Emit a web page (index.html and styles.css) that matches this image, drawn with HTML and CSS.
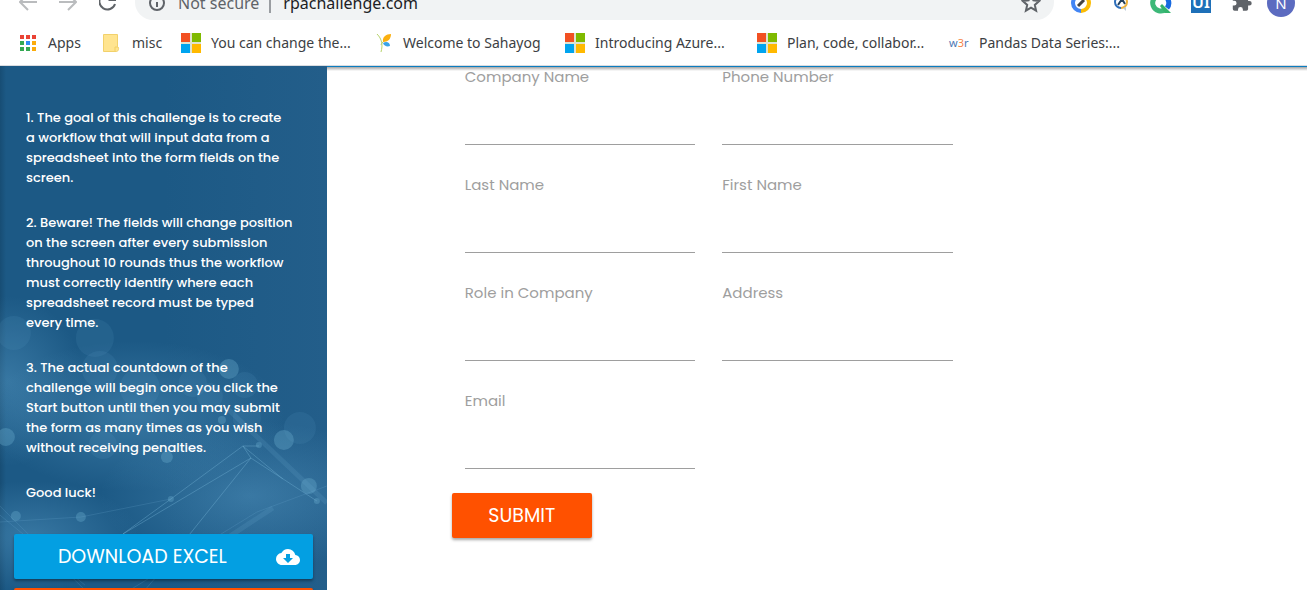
FILE: index.html
```html
<!DOCTYPE html>
<html lang="en">
<head>
<meta charset="utf-8">
<title>RPA Challenge</title>
<link rel="stylesheet" href="styles.css">
</head>
<body>
<svg class="defs" aria-hidden="true">
  <symbol id="windows" viewBox="0 0 20 20"><path fill="#dfe3d0" d="M0 0h20v20H0z"/><path fill="#f25022" d="M0 0h9v9H0z"/><path fill="#7fba00" d="M11 0h9v9h-9z"/><path fill="#00a4ef" d="M0 11h9v9H0z"/><path fill="#ffb900" d="M11 11h9v9h-9z"/></symbol>
</svg>
<header class="browser">
  <div class="toolbar">
    <div class="toolbar-row">
      <button class="nav" aria-label="Back"><svg width="18" height="18" viewBox="0 0 18 18"><path d="M18 9H2M9 1 1 9l8 8" fill="none" stroke="#babcbe" stroke-width="2"/></svg></button>
      <button class="nav" aria-label="Forward"><svg width="18" height="18" viewBox="0 0 18 18"><path d="M0 9h16M9 1l8 8-8 8" fill="none" stroke="#babcbe" stroke-width="2"/></svg></button>
      <button class="nav" aria-label="Reload"><svg width="18" height="18" viewBox="0 0 18 18"><path d="M15 4A8 8 0 1 0 16 11" fill="none" stroke="#5f6368" stroke-width="2"/><path d="M17 0v8H9z" fill="#5f6368"/></svg></button>
      <div class="address">
        <svg width="18" height="18" viewBox="0 0 18 18"><circle cx="9" cy="9" r="7" fill="none" stroke="#5f6368" stroke-width="2"/><path d="M9 8v5M9 4v2" stroke="#5f6368" stroke-width="2"/></svg>
        <span class="insecure">Not secure</span><span class="divider"></span><span class="url">rpachallenge.com</span>
        <svg class="star" width="20" height="20" viewBox="0 0 20 20"><path d="m10 2 2.4 5.4 5.8.6-4.4 3.9 1.3 5.8L10 14.700l-5.100 3 1.300-5.800L1.800 8l5.800-.6z" fill="none" stroke="#5f6368" stroke-width="2"/></svg>
      </div>
      <div class="extensions">
        <button class="ext" aria-label="Edit extension"><svg width="20" height="20" viewBox="0 0 20 20"><path d="M10 2a8 8 0 0 0 0 16" fill="none" stroke="#4285f4" stroke-width="4"/><path d="M10 2a8 8 0 0 1 0 16" fill="none" stroke="#fbbc04" stroke-width="4"/><path d="m7 13 6-6" stroke="#444" stroke-width="3"/></svg></button>
        <button class="ext" aria-label="Search extension"><svg width="18" height="20" viewBox="0 0 18 20"><path d="M9 3a6 6 0 0 0 0 12" fill="none" stroke="#2f6fba" stroke-width="2"/><path d="M9 3a6 6 0 0 1 0 12" fill="none" stroke="#edb13c" stroke-width="2"/><path d="m6 12 4-6 3 5M9 8l2-1" fill="none" stroke="#23415e" stroke-width="2"/><path d="m11 15 3 3v-4" fill="#b9cad5"/></svg></button>
        <button class="ext" aria-label="Q extension"><svg width="22" height="22" viewBox="0 0 22 22"><path d="M11 3a8 8 0 1 0 5 14" fill="none" stroke="#3cb878" stroke-width="5"/><path d="M11 3a8 8 0 0 1 6 13" fill="none" stroke="#1769e0" stroke-width="5"/><path d="m12 12 9 9h-6l-5-7z" fill="#34b46c"/></svg></button>
        <button class="ext" aria-label="UI extension"><span class="ui-logo">UI</span></button>
        <button class="ext" aria-label="Extensions"><svg width="24" height="24" viewBox="0 0 24 24"><path d="M20.500 11H19V7a2 2 0 0 0-2-2h-4V3.500a2.500 2.500 0 0 0-5 0V5H4a2 2 0 0 0-2 2v3.800h1.500a2.700 2.700 0 0 1 0 5.400H2V20a2 2 0 0 0 2 2h3.800v-1.500a2.700 2.700 0 0 1 5.400 0V22H17a2 2 0 0 0 2-2v-4h1.500a2.500 2.500 0 0 0 0-5z" fill="#5f6368" transform="translate(2 0) scale(.9)"/></svg></button>
        <button class="ext" aria-label="Profile"><span class="avatar">N</span></button>
      </div>
    </div>
  </div>
  <nav class="bookmarks">
    <a class="mark apps" href="#"><svg width="18" height="18" viewBox="0 0 18 18"><path fill="#ea4335" d="M1 1h4v4H1zM7 1h4v4H7zM13 1h4v4h-4z"/><path fill="#34a853" d="M1 7h4v4H1zM1 13h4v4H1zM7 13h4v4H7z"/><path fill="#2f8df5" d="M7 7h4v4H7z"/><path fill="#fbab0b" d="M13 7h4v4h-4zM13 13h4v4h-4z"/></svg><span>Apps</span></a>
    <a class="mark folder" href="#"><svg width="18" height="20" viewBox="0 0 18 20"><path fill="#ffe48f" stroke="#f2d16b" d="M1.500 1.500h14v12c2 1 1 5-1 5h-13z"/><path d="M13 18v-4h3" fill="none" stroke="#f2cf62"/></svg><span>misc</span></a>
    <a class="mark" href="#"><svg width="20" height="20"><use href="#windows"/></svg><span>You can change the...</span></a>
    <a class="mark" href="#"><svg width="20" height="20" viewBox="0 0 20 20"><path d="M4 1c5 5 6 11 4 18M8 12c1-3 3-4 5-5" fill="none" stroke="#b7d36b"/><path d="M10 9c-1-5 3-8 8-8 0 5-3 8-8 8z" fill="#fbb010"/><path d="M10 10c3-2 7-1 7 3-3 1-6 0-7-3z" fill="#39a4e8"/></svg><span>Welcome to Sahayog</span></a>
    <a class="mark" href="#"><svg width="20" height="20"><use href="#windows"/></svg><span>Introducing Azure...</span></a>
    <a class="mark" href="#"><svg width="20" height="20"><use href="#windows"/></svg><span>Plan, code, collabor...</span></a>
    <a class="mark" href="#"><span class="w3r">w<b>3</b>r</span><span>Pandas Data Series:...</span></a>
  </nav>
</header>
<div class="page">
  <aside class="sidebar">
    <svg class="network" viewBox="0 0 327 524" preserveAspectRatio="xMidYMid slice" aria-hidden="true">
      <defs>
        <radialGradient id="glow"><stop offset="0" stop-color="#6bb0da" stop-opacity=".34"/><stop offset="1" stop-color="#6bb0da" stop-opacity="0"/></radialGradient>
      </defs>
      <ellipse cx="8" cy="315" rx="75" ry="85" fill="url(#glow)"/>
      <ellipse cx="135" cy="350" rx="150" ry="75" fill="url(#glow)"/>
      <ellipse cx="250" cy="430" rx="150" ry="75" fill="url(#glow)"/>
      <ellipse cx="30" cy="470" rx="110" ry="55" fill="url(#glow)"/>
      <g fill="#65a8cf" fill-opacity=".12">
        <circle cx="14" cy="267" r="17"/><circle cx="95" cy="272" r="19"/><circle cx="100" cy="303" r="18"/><circle cx="140" cy="322" r="20"/>
        <circle cx="193" cy="317" r="14"/><circle cx="245" cy="319" r="13"/><circle cx="247" cy="352" r="14"/><circle cx="300" cy="362" r="16"/><circle cx="210" cy="330" r="13"/><circle cx="103" cy="379" r="14"/>
      </g>
      <g fill="#68abce" fill-opacity=".36">
        <circle cx="6" cy="371" r="9"/><circle cx="229" cy="303" r="10"/><circle cx="284" cy="374" r="10"/><circle cx="309" cy="420" r="8"/><circle cx="167" cy="391" r="6"/><circle cx="222" cy="354" r="4"/><circle cx="16" cy="450" r="5"/><circle cx="81" cy="451" r="5"/><circle cx="171" cy="433" r="3"/><circle cx="259" cy="379" r="3"/><circle cx="317" cy="435" r="3"/>
      </g>
      <g fill="none" stroke="#73b1d5">
        <path stroke-opacity=".4" d="m243 380 8 12-128 76M243 380l-72 53-48 35M251 392l-61 76M243 380l40 33M251 392l66 43M243 380h16"/>
        <path stroke-opacity=".2" d="m81 451 90-18M0 456l81-5M0 440l85 84M0 449l85 70M130 524l127-78 70-26M145 524l20-23"/>
        <path stroke-width="5" stroke-opacity=".16" d="m229 344 98 93M273 442l-90 59"/>
      </g>
    </svg>
    <div class="instructions">
      <p>1. The goal of this challenge is to create<br>a workflow that will input data from a<br>spreadsheet into the form fields on the<br>screen.</p>
      <p>2. Beware! The fields will change position<br>on the screen after every submission<br>throughout 10 rounds thus the workflow<br>must correctly identify where each<br>spreadsheet record must be typed<br>every time.</p>
      <p>3. The actual countdown of the<br>challenge will begin once you click the<br>Start button until then you may submit<br>the form as many times as you wish<br>without receiving penalties.</p>
      <p>Good luck!</p>
    </div>
    <div class="actions">
      <a class="btn download" href="#"><span>DOWNLOAD EXCEL</span><svg width="24" height="24" viewBox="0 0 24 24"><path fill="#fff" d="M19.350 10.040A7.490 7.490 0 0 0 12 4C9.110 4 6.600 5.640 5.350 8.040A5.994 5.994 0 0 0 0 14c0 3.310 2.690 6 6 6h13c2.760 0 5-2.240 5-5 0-2.640-2.050-4.780-4.650-4.960zM17 13l-5 5-5-5h3V9h4v4h3z"/></svg></a>
      <button class="btn start" aria-label="Start"></button>
    </div>
  </aside>
  <main class="content">
    <form class="form">
      <div class="fields">
        <div class="field"><label for="company">Company Name</label><input id="company" type="text"></div>
        <div class="field"><label for="phone">Phone Number</label><input id="phone" type="text"></div>
        <div class="field"><label for="last">Last Name</label><input id="last" type="text"></div>
        <div class="field"><label for="first">First Name</label><input id="first" type="text"></div>
        <div class="field"><label for="role">Role in Company</label><input id="role" type="text"></div>
        <div class="field"><label for="address">Address</label><input id="address" type="text"></div>
        <div class="field"><label for="email">Email</label><input id="email" type="text"></div>
      </div>
      <button class="btn submit" type="submit">SUBMIT</button>
    </form>
  </main>
</div>
</body>
</html>
```
FILE: styles.css
```css
* { box-sizing: border-box; }
body {
  margin: 0;
  height: 100vh;
  overflow: hidden;
  display: flex;
  flex-direction: column;
  background: #fff;
  font-family: Poppins, Inter, sans-serif;
}
button { border: 0; padding: 0; background: none; font: inherit; }
a { color: inherit; text-decoration: none; }
svg { flex: none; }
.defs { position: absolute; width: 0; height: 0; }

.browser { flex: none; font-family: "Segoe UI", "Noto Sans", sans-serif; }
.toolbar { height: 20px; overflow: hidden; display: flex; align-items: flex-end; }
.toolbar-row { flex: 1; height: 36px; display: flex; align-items: center; padding: 0 6px 0 8px; }
.nav { width: 40px; display: flex; justify-content: center; }
.address {
  flex: 1;
  height: 36px;
  display: flex;
  align-items: center;
  margin: 0 7px;
  padding: 2px 13px 0;
  border-radius: 18px;
  background: #f1f3f4;
  font-size: 16px;
  line-height: 34px;
  color: #202124;
}
.insecure { margin-left: 12px; color: #5f6368; }
.divider { width: 2px; height: 20px; margin: 0 12px 0 10px; background: #9a9da1; }
.star { margin-left: auto; }
.extensions { display: flex; }
.ext { width: 40px; height: 36px; padding-top: 2px; display: flex; align-items: center; justify-content: center; }
.ui-logo { width: 20px; height: 20px; background: #1e70b8; color: #fff; font-size: 16px; line-height: 18px; font-weight: 600; }
.avatar { width: 28px; height: 28px; border-radius: 50%; background: #5c6bc0; color: #fff; font-size: 15px; line-height: 28px; }

.bookmarks {
  height: 46px;
  display: flex;
  align-items: center;
  padding-left: 19px;
  border-bottom: 1px solid #dadce0;
  font-size: 14px;
  line-height: 20px;
  color: #3c4043;
}
.mark { width: 192px; height: 20px; display: flex; align-items: center; gap: 10px; white-space: nowrap; }
.apps { width: 83px; gap: 11px; }
.folder { width: 79px; gap: 12px; }
.w3r { width: 20px; font-size: 11px; color: #4d78b5; }
.w3r b { color: #f58549; font-weight: 400; }

.page { flex: 1; min-height: 0; display: flex; }
.sidebar {
  position: relative;
  width: 25%;
  overflow: hidden;
  padding: 42px 14px 0;
  background: linear-gradient(90deg, #174d74 0, #1c5985 6px, #1c5985 50%, #235e8a 100%);
  color: #fff;
}
.network { position: absolute; inset: 0; width: 100%; height: 100%; }
.instructions { position: relative; padding: 0 12px; font-size: 13px; line-height: 20px; font-weight: 500; white-space: nowrap; }
.instructions p { margin: 0 0 25px; }
.actions { position: relative; display: grid; gap: 9px; padding-top: 6px; }
.btn {
  height: 45px;
  border-radius: 2px;
  color: #fff;
  font-size: 19px;
  line-height: 45px;
  box-shadow: 0 2px 3px rgba(0, 0, 0, .35);
}
.download { display: flex; align-items: center; gap: 5px; padding: 0 13px 0 0; background: #039fe2; }
.download span { flex: 1; text-align: center; }
.start { background: #ff5100; }

.content {
  flex: 1;
  min-width: 0;
  padding-left: 125px;
  border-top: 1px solid #0b7dc0;
  background: linear-gradient(rgba(0, 0, 0, .35), transparent) top / 100% 4px no-repeat;
}
.form { max-width: 514px; }
.fields { display: grid; grid-template-columns: 1fr 1fr; gap: 30px 27px; padding: 0 13px; }
.field { display: flex; flex-direction: column; }
.field label { font-size: 15px; line-height: 20px; color: #9e9e9e; }
.field input {
  width: 100%;
  height: 58px;
  padding: 0;
  border: 0;
  border-bottom: 1px solid #9e9e9e;
  background: none;
  font: inherit;
  outline: 0;
}
.submit { width: 140px; margin-top: 24px; background: #ff5100; }
```
